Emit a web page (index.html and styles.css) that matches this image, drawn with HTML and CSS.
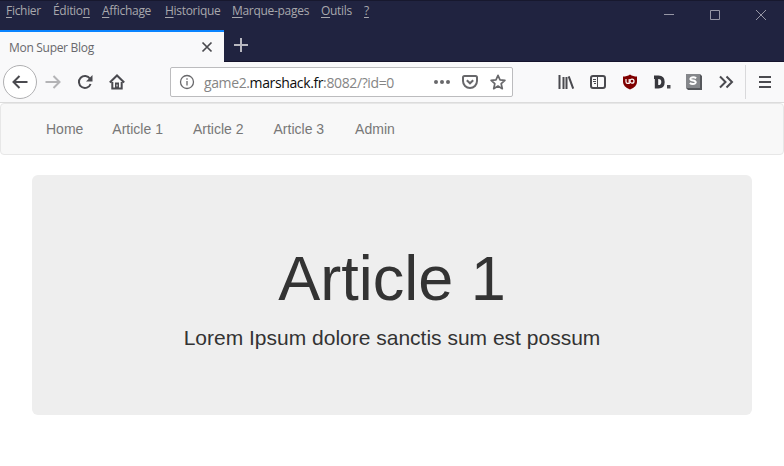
FILE: index.html
```html
<!DOCTYPE html>
<html lang="fr">
<head>
<meta charset="utf-8">
<title>Mon Super Blog</title>
<link rel="stylesheet" href="styles.css">
</head>
<body>
<header class="titlebar">
  <div class="menurow">
    <nav class="menu"><span><u>F</u>ichier</span><span>Éditio<u>n</u></span><span><u>A</u>ffichage</span><span><u>H</u>istorique</span><span><u>M</u>arque-pages</span><span><u>O</u>utils</span><span><u>?</u></span></nav>
    <div class="controls">
      <svg viewBox="0 0 10 10"><path d="M0 4.5h10"/></svg>
      <svg viewBox="0 0 10 10"><path d="M.5.5h9v9h-9z"/></svg>
      <svg viewBox="0 0 10 10"><path d="M0 0l10 10M10 0L0 10"/></svg>
    </div>
  </div>
  <div class="tabs">
    <div class="tab"><span class="tab-title">Mon Super Blog</span><svg class="tab-close" viewBox="0 0 10 10"><path d="M.5.5l9 9M9.500.5l-9 9"/></svg></div>
    <svg class="plus" viewBox="0 0 14 14"><path d="M7 0v14M0 7h14"/></svg>
  </div>
</header>
<div class="toolbar">
  <div class="back"><svg class="icon" viewBox="0 0 16 16"><path d="M15.500 8H1.500M7.500 2L1.500 8l6 6"/></svg></div>
  <div class="navicons">
    <svg class="icon faded" viewBox="0 0 16 16"><path d="M.5 8h14M8.500 2l6 6-6 6"/></svg>
    <svg class="icon" viewBox="0 0 16 16"><path d="M13 4.700A6 6 0 1 0 13.600 10"/><path class="solid" d="M15.500 1v6.500H9z"/></svg>
    <svg class="icon" viewBox="0 0 16 16"><path d="M.8 8.500L8 1.500l7.200 7M3.300 8v6.500h9.400V8"/><path class="solid" d="M6 8.500h4v6H6z"/><path class="pale" d="M8 10.500v2"/></svg>
  </div>
  <div class="urlbar">
    <svg class="icon info" viewBox="0 0 16 16"><circle cx="8" cy="8" r="6.500"/><path d="M8 7v4.500M8 4.200v1.600"/></svg>
    <span class="url">game2.<b>marshack.fr</b>:8082/?id=0</span>
    <div class="urlicons">
      <svg class="icon" viewBox="0 0 16 16"><g class="solid"><circle cx="2" cy="8" r="2"/><circle cx="8" cy="8" r="2"/><circle cx="14" cy="8" r="2"/></g></svg>
      <svg class="icon" viewBox="0 0 16 16"><path d="M2.500 2h11q1.500 0 1.500 1.500V7A7 7 0 0 1 1 7V3.500Q1 2 2.500 2zM4.800 6.200L8 9.300l3.200-3.100"/></svg>
      <svg class="icon" viewBox="0 0 16 16"><path class="star" d="M8 1.300l2 4.500 4.900.5-3.700 3.400 1.100 5L8 12.100l-4.300 2.600 1.100-5L1.100 6.300 6 5.800z"/></svg>
    </div>
  </div>
  <div class="extensions">
    <svg class="icon" viewBox="0 0 16 16"><path d="M1.500 1v14M5.500 3v12M8.500 3v12M10.700 2.300l4.500 12.400"/></svg>
    <svg class="icon" viewBox="0 0 16 16"><rect x="1" y="2" width="14" height="12" rx="2"/><path class="thin" d="M7.500 2v12M3 5.500h3M3 7.500h3M4 9.500h2"/></svg>
    <svg class="icon" viewBox="0 0 16 16"><path class="shield" d="M8 .5C6 2 3.500 2.500 1 2.500V8q0 4.500 7 7.500 7-3 7-7.500V2.500C12.500 2.500 10 2 8 .5z"/><path class="shield-mark" d="M4 5v2.700q0 1.600 1.500 1.600H7.200V5"/><circle class="shield-mark" cx="10" cy="7.200" r="2"/></svg>
    <svg class="icon" viewBox="0 0 16 16"><path class="dmark" d="M0 3.200H4.500q4.500 0 4.500 4.800t-4.500 4.800H2.500V3.200"/><path class="solid" d="M13 11h3.500v3.500H13z"/></svg>
    <svg class="icon" viewBox="0 0 16 16"><path class="side" d="M0 0h14l2 2v14H2l-2-2z"/><path class="face" d="M0 0h14v14H0z"/><path class="smark" d="M10.200 4.200Q8.500 3 6 3.400 4 4 4.500 5.500 5 6.300 7 6.600 10 7 9.700 8.600 9 10 7 10 5 10 3.800 9"/></svg>
    <svg class="icon" viewBox="0 0 16 16"><path d="M2 2.500L7.500 8 2 13.500M8.500 2.500L14 8l-5.500 5.500"/></svg>
  </div>
  <div class="burger"><svg viewBox="0 0 12 12"><path d="M0 1h12M0 6h12M0 11h12"/></svg></div>
</div>
<main class="page">
  <nav class="navbar"><a>Home</a><a>Article 1</a><a>Article 2</a><a>Article 3</a><a>Admin</a></nav>
  <section class="jumbotron">
    <h1>Article 1</h1>
    <p>Lorem Ipsum dolore sanctis sum est possum</p>
  </section>
</main>
</body>
</html>
```
FILE: styles.css
```css
* { box-sizing: border-box; }
body { margin: 0; background: #fff; overflow: hidden; font-family: "Liberation Sans", Arial, sans-serif; }
svg { display: block; fill: none; flex: none; overflow: visible; }
.titlebar { height: 62px; background: #202340; border-top: 1px solid #17182e; border-bottom: 1px solid #15132c; font: 12px "Open Sans", sans-serif; }
.menurow { height: 29px; display: flex; justify-content: space-between; }
.menu { display: grid; grid-template-columns: 47px 49px 63px 67px 89px 43px 20px; padding-left: 6px; line-height: 20px; color: #a8a8ad; letter-spacing: -.3px; white-space: nowrap; }
.menu u { text-underline-offset: 2px; text-decoration-skip-ink: none; }
.controls { display: flex; gap: 36px; padding: 9px 18px 0 0; }
.controls svg { width: 10px; height: 10px; stroke: #9696a5; stroke-width: 1; }
.tabs { display: flex; height: 32px; align-items: center; }
.tab { width: 224px; height: 32px; background: #f9f9fa; border-top: 2px solid #0a84ff; display: flex; align-items: center; justify-content: space-between; padding: 0 12px 0 9px; color: #68686c; }
.tab-title { letter-spacing: -.3px; }
.tab-close { width: 10px; height: 10px; stroke: #4a4a4f; stroke-width: 1.7; }
.plus { width: 14px; height: 14px; margin: 0 0 2px 10px; stroke: #b8b8c0; stroke-width: 2; }
.toolbar { height: 41px; background: #f9f9fa; border-bottom: 1px solid #dcdcdc; display: flex; align-items: center; color: #4a4a4f; }
.icon { width: 16px; height: 16px; stroke: currentColor; stroke-width: 2; }
.back { width: 34px; height: 34px; margin-left: 3px; border: 1px solid #b0b0b2; border-radius: 50%; background: #fff; display: grid; place-items: center; }
.navicons { display: flex; gap: 16px; margin-left: 8px; }
.faded { color: #b4b4b6; }
.solid { fill: currentColor; stroke: none; }
.pale { stroke: #f9f9fa; stroke-width: 1; }
.urlbar { width: 343px; height: 30px; margin-left: 45px; padding: 0 6px 0 8px; border: 1px solid #bcbcbe; border-radius: 2px; background: #fff; display: flex; align-items: center; color: #68686b; }
.info { stroke-width: 1.3; }
.url { margin-left: 9px; padding-top: 2px; font: 14px/26px "Open Sans", sans-serif; letter-spacing: -.38px; color: #858585; white-space: nowrap; }
.url b { font-weight: 400; color: #0c0c0d; }
.urlicons { display: flex; gap: 12px; margin-left: auto; }
.star { stroke-width: 1.7; stroke-linejoin: round; }
.extensions { display: flex; gap: 16px; margin-left: 45px; }
.thin { stroke-width: 1; }
.shield { fill: #800000; stroke: none; }
.shield-mark { stroke: #fff; stroke-width: 1.2; }
.dmark { stroke: #38383d; stroke-width: 3.4; }
.side { fill: #55575b; stroke: none; }
.face { fill: #85878b; stroke: none; }
.smark { stroke: #fff; stroke-width: 2; }
.burger { height: 34px; margin-left: 11px; padding: 0 0 0 13px; border-left: 1px solid #d9d9db; display: flex; align-items: center; }
.burger svg { width: 12px; height: 12px; stroke: currentColor; stroke-width: 2; }
.navbar { height: 52px; border: 1px solid #e7e7e7; border-radius: 4px; background: #f8f8f8; display: flex; padding-left: 30px; font-size: 14px; line-height: 20px; color: #777; }
.navbar a { padding: 15px; }
.navbar a:first-child { padding-right: 14px; }
.navbar a:last-child { padding-left: 16px; }
.jumbotron { height: 240px; margin: 20px 32px 0; padding: 49px 60px 47px; border-radius: 6px; background: #eee; color: #333; text-align: center; }
.jumbotron h1 { margin: 20px 0 10px; font-size: 63px; font-weight: 400; line-height: 1.1; }
.jumbotron p { margin: 0 0 15px; font-size: 21px; line-height: 30px; }
```
